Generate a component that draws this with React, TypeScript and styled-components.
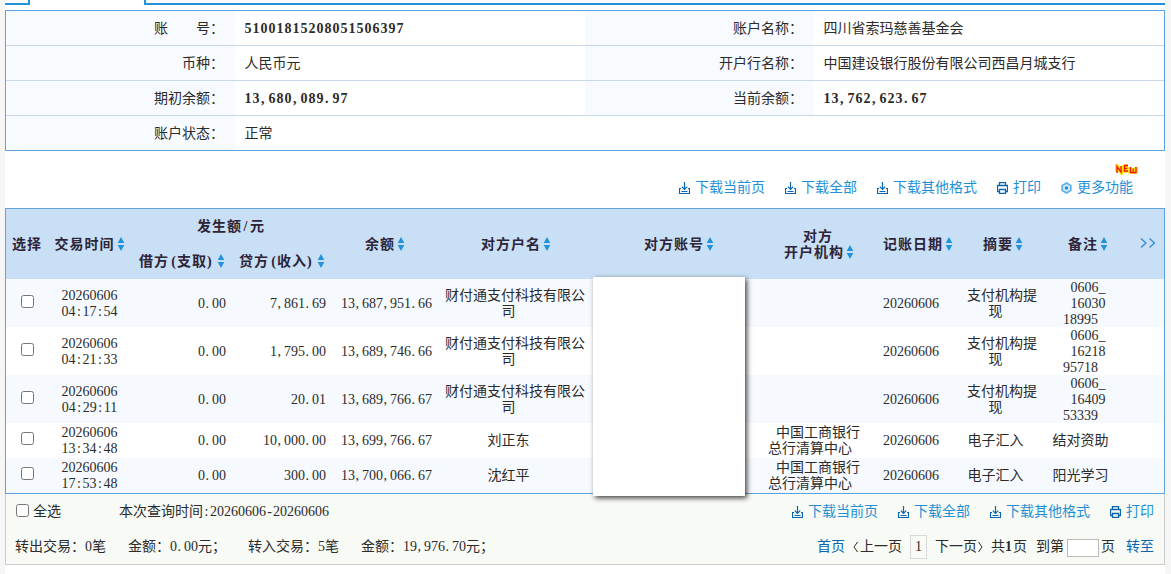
import React from "react";
import styled, { createGlobalStyle, css } from "styled-components";

const line = "#5ea3de";
const link = "#1f8fd6";
const deep = "#0a65b0";

const GlobalStyle = createGlobalStyle`
  * { box-sizing: border-box; }
  body {
    margin: 0;
    background: #f6f6f6;
    color: #2b2b2b;
    font: 400 14px/16px "Liberation Serif", "Noto Sans CJK SC", serif;
  }
`;

const Page = styled.div`
  width: 1171px;
  height: 574px;
  padding: 0 6px 0 5px;
  overflow: hidden;
`;

const Sheet = styled.main`
  width: 1160px;
  height: 574px;
  background: #fff;
`;

const Tabs = styled.div`
  display: flex;
  height: 5px;
`;

const Tab = styled.div<{ $w?: number; $edge?: "left" | "right" }>`
  width: ${(p) => (p.$w ? `${p.$w}px` : "auto")};
  flex: ${(p) => (p.$w ? "none" : 1)};
  background: ${(p) => (p.$edge ? "#fafafa" : "#fff")};
  ${(p) =>
    p.$edge &&
    css`
      border-bottom: 2px solid #2492d8;
      border-${p.$edge}: 2px solid #2492d8;
    `}
`;

const Info = styled.section`
  margin-top: 5px;
  border: 1px solid ${line};
`;

const InfoRow = styled.div`
  display: grid;
  grid-template-columns: 229px 350px 229px 350px;
  height: 35px;
  line-height: 34px;
  border-bottom: 1px solid #c6d9ec;
  &:last-child {
    height: 34px;
    border-bottom: 0;
  }
`;

const Label = styled.div`
  padding: 1px 11px 0 0;
  height: 34px;
  text-align: right;
  background: #f7fbff;
  white-space: pre;
`;

const Value = styled.div`
  height: 34px;
  padding: 1px 0 0 9.5px;
`;

const Strong = styled.strong`
  font-weight: 700;
  letter-spacing: 1px;
`;

const Mark = styled.span<{ $before: number; $after: number }>`
  padding-left: ${(p) => p.$before}px;
  letter-spacing: ${(p) => p.$after}px;
`;

const Toolbar = styled.div<{ $footer?: boolean }>`
  display: flex;
  justify-content: flex-end;
  align-items: center;
  gap: 20px;
  ${(p) => !p.$footer && "height: 57px; padding: 17px 32px 0 0;"}
`;

const Action = styled.a`
  position: relative;
  display: flex;
  align-items: center;
  gap: 5px;
  color: ${link};
  svg { flex: none; }
`;

const NewBadge = styled.svg`
  position: absolute;
  right: -5px;
  top: -16px;
`;

const Wrap = styled.div`
  position: relative;
`;

const Table = styled.table`
  width: 1160px;
  table-layout: fixed;
  border-spacing: 0;
  border: 1px solid ${line};
`;

const Th = styled.th<{ $tail?: number }>`
  height: 35px;
  padding: 0 ${(p) => p.$tail ?? 0}px 0 0;
  background: #c8dff5;
  color: #2d2438;
  font-weight: 700;
  white-space: nowrap;
`;

const HeadText = styled.div<{ $shift: number }>`
  display: flex;
  justify-content: center;
  align-items: center;
  padding: 1px 0 0 ${(p) => p.$shift * 2}px;
  height: 16px;
  letter-spacing: 1px;
  svg { margin: -2px 0 0 2px; flex: none; }
`;

const Row = styled.tr<{ $tall: boolean }>`
  height: ${(p) => (p.$tall ? 48 : 35)}px;
  line-height: ${(p) => (p.$tall ? 17 : 16)}px;
  background: #fff;
  &:nth-child(odd) { background: #f6fafe; }
`;

const Td = styled.td<{ $right?: boolean }>`
  padding: 0 ${(p) => (p.$right ? 5 : 0)}px 0 0;
  text-align: ${(p) => (p.$right ? "right" : "center")};
  vertical-align: middle;
  white-space: nowrap;
`;

const Line = styled.div<{ $tail?: number }>`
  height: 16px;
  padding-right: ${(p) => p.$tail ?? 0}px;
`;

const Check = styled.input.attrs({ type: "checkbox" })`
  display: block;
  width: 13px;
  height: 13px;
  margin: 0 0 4px 15px;
`;

const Cover = styled.div`
  position: absolute;
  left: 588px;
  top: 69px;
  width: 152px;
  height: 219px;
  background: #fff;
  box-shadow: 2px 2px 5px rgba(0, 0, 0, 0.75);
`;

const Footer = styled.footer`
  height: 71px;
  padding: 0 10px 0 9px;
  border: 1px solid #ccc;
  border-top: 0;
  background: #f8faf5;
`;

const FootRow = styled.div`
  display: flex;
  justify-content: space-between;
  align-items: center;
  height: 35px;
`;

const Group = styled.div<{ $gap?: number }>`
  display: flex;
  align-items: center;
  gap: ${(p) => p.$gap ?? 0}px;
  white-space: nowrap;
`;

const SelectAll = styled.label`
  display: flex;
  align-items: center;
  width: 104px;
  gap: 4px;
  input { margin: 0 0 2px 1px; }
`;

const PageLink = styled.a<{ $lead?: number }>`
  margin-left: ${(p) => p.$lead ?? 0}px;
  color: ${deep};
`;

const PageTotal = styled.span`
  margin-right: 1px;
`;

const Current = styled.span`
  width: 17px;
  height: 24px;
  border: 1px solid #d8d8d8;
  line-height: 22px;
  text-align: center;
`;

const PageInput = styled.input`
  width: 32px;
  height: 18px;
  margin: 2px 2px 0 3px;
  padding: 0;
  border: 1px solid #bbb;
  background: #fff;
`;

/* Space added before and after each mark to fill a 7px half-width cell. */
const MARKS: Record<string, [number, number]> = {
  ",": [0.5, 3],
  ".": [0.5, 3],
  ":": [1.5, 1.6],
  "-": [1.2, 1.15],
  "/": [1.5, 1.6],
  "(": [2.35, 0],
  ")": [0, 2.35],
};

function Fig({ t, bold }: { t: string; bold?: boolean }) {
  const parts = t.split(/([,.:\-/()])/).filter(Boolean);
  return (
    <span>
      {parts.map((s, i) =>
        s in MARKS ? (
          <Mark key={i} $before={MARKS[s][0]} $after={MARKS[s][1] + (bold ? 1 : 0)}>{s}</Mark>
        ) : (
          <React.Fragment key={i}>{s}</React.Fragment>
        )
      )}
    </span>
  );
}

const SortIcon = () => (
  <svg width="8" height="14" viewBox="0 0 8 14" fill="#2492d8">
    <path d="M4 0L7.3 6H.7zM4 14L.7 8h6.6z" />
  </svg>
);

const DownloadIcon = () => (
  <svg width="11" height="12" viewBox="0 0 11 12" fill="none" stroke={deep} strokeWidth="1.2">
    <path d="M5.5 0v7.5M2.8 4.6l2.7 2.7 2.7-2.7M2 6.5H.5v5h10v-5H9M2.5 9.5h6" />
  </svg>
);

const PrintIcon = () => (
  <svg width="11" height="12" viewBox="0 0 11 12" fill="none" stroke={deep} strokeWidth="1.3">
    <path d="M2.5 3.5v-3h6v3M2.5 9.5H.5v-6h10v6h-2M2.5 7.5h6v4h-6z" />
  </svg>
);

const GearIcon = () => (
  <svg width="11" height="12" viewBox="0 0 11 12">
    <path d="M5.5 1L9.8 3.5v5L5.5 11 1.2 8.5v-5z" fill="#d5ebfa" stroke="#62b1e3" strokeWidth="1.8" strokeLinejoin="round" />
    <circle cx="5.5" cy="6" r="1.8" fill="#2492d8" />
  </svg>
);

function Downloads() {
  return (
    <>
      {["下载当前页", "下载全部", "下载其他格式"].map((t) => (
        <Action key={t}><DownloadIcon />{t}</Action>
      ))}
      <Action><PrintIcon />打印</Action>
    </>
  );
}

function Head({ t, sort = true, shift = 1 }: { t: string; sort?: boolean; shift?: number }) {
  return (
    <HeadText $shift={shift}>
      <Fig t={t} bold />
      {sort && <SortIcon />}
    </HeadText>
  );
}

type Entry = {
  time: string; credit: string; balance: string; name: string[];
  bank: string[]; summary: string[]; memo: string[];
};

const tencent = ["财付通支付科技有限公", "司"];
const icbc = ["中国工商银行", "总行清算中心"];
const withdraw = ["支付机构提", "现"];

const entries: Entry[] = [
  { time: "04:17:54", credit: "7,861.69", balance: "13,687,951.66", name: tencent, bank: [], summary: withdraw, memo: ["0606_", "16030", "18995"] },
  { time: "04:21:33", credit: "1,795.00", balance: "13,689,746.66", name: tencent, bank: [], summary: withdraw, memo: ["0606_", "16218", "95718"] },
  { time: "04:29:11", credit: "20.01", balance: "13,689,766.67", name: tencent, bank: [], summary: withdraw, memo: ["0606_", "16409", "53339"] },
  { time: "13:34:48", credit: "10,000.00", balance: "13,699,766.67", name: ["刘正东"], bank: icbc, summary: ["电子汇入"], memo: ["结对资助"] },
  { time: "17:53:48", credit: "300.00", balance: "13,700,066.67", name: ["沈红平"], bank: icbc, summary: ["电子汇入"], memo: ["阳光学习"] },
];

const columns = [42, 83, 100, 100, 106, 156, 172, 106, 92, 78, 94, 29];

function Lines({ rows, tail }: { rows: string[]; tail: number }) {
  return (
    <>
      {rows.map((r, i) => (
        <Line key={r} $tail={i === rows.length - 1 ? tail : 0}>{r}</Line>
      ))}
    </>
  );
}

export default function App() {
  return (
    <Page lang="zh-CN">
      <GlobalStyle />
      <Sheet>
        <Tabs>
          <Tab $w={25} $edge="right" />
          <Tab $w={114} />
          <Tab $edge="left" />
        </Tabs>
        <Info>
          <InfoRow>
            <Label>{"账\u3000\u3000号："}</Label>
            <Value><Strong>51001815208051506397</Strong></Value>
            <Label>账户名称：</Label>
            <Value>四川省索玛慈善基金会</Value>
          </InfoRow>
          <InfoRow>
            <Label>币种：</Label>
            <Value>人民币元</Value>
            <Label>开户行名称：</Label>
            <Value>中国建设银行股份有限公司西昌月城支行</Value>
          </InfoRow>
          <InfoRow>
            <Label>期初余额：</Label>
            <Value><Strong><Fig t="13,680,089.97" bold /></Strong></Value>
            <Label>当前余额：</Label>
            <Value><Strong><Fig t="13,762,623.67" bold /></Strong></Value>
          </InfoRow>
          <InfoRow>
            <Label>账户状态：</Label>
            <Value>正常</Value>
          </InfoRow>
        </Info>

        <Toolbar>
          <Downloads />
          <Action>
            <GearIcon />更多功能
            <NewBadge width="23" height="11" viewBox="0 0 23 11" fill="none">
              <path d="M2 8V2l4 6V2M9 2h4M9 1v6h4M9 4h3M15 3v5h3V4v4h3V3" stroke="#ffe000" strokeWidth="3.6" />
              <path d="M2 9V2.5L6 8V2M13 1.5H9.5V7H13M9.5 4.3h3M15.5 3v5.5h2.7V4.5v4H21V3" stroke="#f01808" strokeWidth="1.3" />
            </NewBadge>
          </Action>
        </Toolbar>

        <Wrap>
          <Table>
            <colgroup>
              {columns.map((w, i) => <col key={i} width={w} />)}
            </colgroup>
            <thead>
              <tr>
                <Th rowSpan={2}><Head t="选择" sort={false} shift={0} /></Th>
                <Th rowSpan={2}><Head t="交易时间" shift={0} /></Th>
                <Th colSpan={2}><Head t="发生额/元" sort={false} shift={0} /></Th>
                <Th rowSpan={2}><Head t="余额" /></Th>
                <Th rowSpan={2}><Head t="对方户名" /></Th>
                <Th rowSpan={2}><Head t="对方账号" shift={0} /></Th>
                <Th rowSpan={2}><Head t="对方" sort={false} shift={0} /><Head t="开户机构" /></Th>
                <Th rowSpan={2}><Head t="记账日期" /></Th>
                <Th rowSpan={2}><Head t="摘要" /></Th>
                <Th rowSpan={2}><Head t="备注" shift={0} /></Th>
                <Th rowSpan={2} $tail={4}>
                  <svg width="16" height="10" viewBox="0 0 16 10" fill="none" stroke="#2f86d6" strokeWidth="1.2">
                    <path d="M1 .5L6 5 1 9.5M9.5.5l5 4.5-5 4.5" />
                  </svg>
                </Th>
              </tr>
              <tr>
                <Th><Head t="借方(支取)" /></Th>
                <Th><Head t="贷方(收入)" /></Th>
              </tr>
            </thead>
            <tbody>
              {entries.map((e) => (
                <Row key={e.time} $tall={e.memo.length > 1}>
                  <Td><Check /></Td>
                  <Td><Line>20260606</Line><Line><Fig t={e.time} /></Line></Td>
                  <Td $right><Line><Fig t="0.00" /></Line></Td>
                  <Td $right><Line><Fig t={e.credit} /></Line></Td>
                  <Td $right><Line><Fig t={e.balance} /></Line></Td>
                  <Td><Lines rows={e.name} tail={13} /></Td>
                  <Td />
                  <Td><Lines rows={e.bank} tail={16} /></Td>
                  <Td><Line $tail={12}>20260606</Line></Td>
                  <Td><Lines rows={e.summary} tail={13} /></Td>
                  <Td><Lines rows={e.memo} tail={15} /></Td>
                  <Td />
                </Row>
              ))}
            </tbody>
          </Table>
          <Cover />
        </Wrap>

        <Footer>
          <FootRow>
            <Group>
              <SelectAll><Check />全选</SelectAll>
              <Fig t="本次查询时间:20260606-20260606" />
            </Group>
            <Toolbar $footer><Downloads /></Toolbar>
          </FootRow>
          <FootRow>
            <Group $gap={22}>
              <span>转出交易：0笔</span>
              <Fig t="金额：0.00元；" />
              <span>转入交易：5笔</span>
              <Fig t="金额：19,976.70元；" />
            </Group>
            <Group $gap={8}>
              <PageLink>首页</PageLink>
              <Group $gap={2}>
                <svg width="5" height="12" viewBox="0 0 5 12" fill="none" stroke="#2b2b2b"><path d="M4.5 1L1 6l3.5 5" /></svg>
                上一页
              </Group>
              <Current>1</Current>
              <Group $gap={1}>
                下一页
                <svg width="5" height="12" viewBox="0 0 5 12" fill="none" stroke="#2b2b2b"><path d="M.5 1L4 6 .5 11" /></svg>
              </Group>
              <PageTotal>共<Strong>1</Strong>页</PageTotal>
              <Group>到第<PageInput />页</Group>
              <PageLink $lead={3}>转至</PageLink>
            </Group>
          </FootRow>
        </Footer>
      </Sheet>
    </Page>
  );
}
